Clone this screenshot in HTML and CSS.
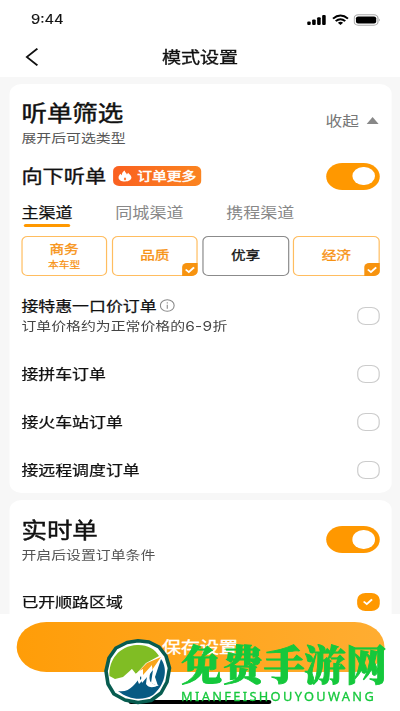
FILE: index.html
```html
<!DOCTYPE html>
<html lang="zh-CN">
<head>
<meta charset="utf-8">
<title>模式设置</title>
<link rel="stylesheet" href="styles.css">
</head>
<body>
<div class="screen">
  <div class="status">
    <span class="time">9:44</span>
    <span class="signals">
      <svg width="16" height="12" viewBox="0 0 16 12"><rect x="0" y="7.5" width="3" height="3.5" rx="1"/><rect x="4.2" y="5.5" width="3" height="5.5" rx="1"/><rect x="8.4" y="3.3" width="3" height="7.7" rx="1"/><rect x="12.6" y="1" width="3" height="10" rx="1"/></svg>
      <svg width="14" height="12" viewBox="0 0 14 12" fill="none" stroke="#000" stroke-width="1.8"><path d="M.7 4.6Q7-1.6 13.3 4.6M3 7.2Q7 3.4 11 7.2"/><path d="M4.8 8.7Q7 7 9.2 8.7L7 11z" fill="#000" stroke="none"/></svg>
      <svg width="23" height="12" viewBox="0 0 23 12"><rect x=".5" y=".8" width="20" height="10.4" rx="3.4" fill="none" stroke="#aaa"/><rect x="2" y="2.4" width="17" height="7.2" rx="1.8"/><path d="M21.5 4.5Q23 6 21.5 7.5z" fill="#999"/></svg>
    </span>
  </div>
  <header class="nav">
    <svg class="back" width="12" height="20" viewBox="0 0 12 20"><path d="M10.4 1.6 1.6 10l8.8 8.4" fill="none" stroke="#111" stroke-width="1.7"/></svg>
    <h1>模式设置</h1>
  </header>
  <main class="content">
    <section class="card">
      <div class="card-head">
        <div><h2>听单筛选</h2><p class="note">展开后可选类型</p></div>
        <span class="fold">收起 <i class="tri"></i></span>
      </div>
      <div class="listen">
        <h3>向下听单</h3>
        <span class="badge"><svg width="12" height="12" viewBox="0 0 12 12"><path d="M6 11.5C2.8 11.5.6 10 .6 7.5.6 5.9 1.5 5 2.1 3.8L3.3 5.2C3.4 3 4.4 1.5 5.8.6 5.9 2.4 7 3 7.6 4.4L8.600 2.8C9.8 4.3 11.4 5.8 11.4 7.6 11.4 10 9.2 11.5 6 11.5z" fill="#fff"/><path d="M6 10.5Q4 9 6 7.2 8 9 6 10.5z" fill="#ff7530"/></svg>订单更多</span>
        <span class="switch"></span>
      </div>
      <nav class="tabs"><span class="on">主渠道</span><span>同城渠道</span><span>携程渠道</span></nav>
      <div class="chips">
        <div class="chip"><b>商务</b><small>本车型</small></div>
        <div class="chip"><b>品质</b><span class="corner"><svg width="9" height="8" viewBox="0 0 9 8"><path d="m1 3.5 2.6 2.6L8 1.4"/></svg></span></div>
        <div class="chip plain"><b>优享</b></div>
        <div class="chip"><b>经济</b><span class="corner"><svg width="9" height="8" viewBox="0 0 9 8"><path d="m1 3.5 2.6 2.6L8 1.4"/></svg></span></div>
      </div>
      <div class="row tall">
        <div>
          <div class="label">接特惠一口价订单<svg width="13" height="13" viewBox="0 0 13 13"><circle cx="6.5" cy="6.5" r="5.8"/><path d="M6.5 5.7v4M6.5 3.2v1.3"/></svg></div>
          <p class="note dark">订单价格约为正常价格的<span class="num">6-9</span>折</p>
        </div>
        <span class="check"></span>
      </div>
      <div class="row"><span class="label">接拼车订单</span><span class="check"></span></div>
      <div class="row"><span class="label">接火车站订单</span><span class="check"></span></div>
      <div class="row"><span class="label">接远程调度订单</span><span class="check"></span></div>
    </section>
    <section class="card">
      <div class="card-head live">
        <div><h2>实时单</h2><p class="note">开启后设置订单条件</p></div>
        <span class="switch"></span>
      </div>
      <div class="row area"><span class="label">已开顺路区域</span><span class="check checked"><svg width="10" height="8" viewBox="0 0 9 8"><path d="m1 3.5 2.6 2.6L8 1.4"/></svg></span></div>
    </section>
  </main>
  <footer class="footer">
    <div class="save">保存设置</div>
    <div class="home"></div>
  </footer>
</div>
<div class="mark">
  <svg class="logo" width="68" height="66" viewBox="0 0 68 66">
    <path d="M23 3.500 34 1.800 45 3 55 8 62 17 65.500 29 63 43 57 54 47 61.500 34 63.500 21 61 10 55 4 45 2 32 5 19 12 9z" fill="#fff" stroke="#075c50" stroke-width="3.6" stroke-linejoin="round"/>
    <path d="M5.500 37C4.500 21 15 7 33 6 43 5.500 51 10 55 17L42 24 32 35 28 30 19 38 11 40z" fill="#80bd24"/>
    <path d="M57 20C65 31 60 47 49 56 39 62 25 61 14 52 26 54 31 45 37 37L38 44 49 31 47 44 54 47 51 38z" fill="#075a83"/>
    <path d="M35 32 43 24 57 18 48 31 48 26 39 36 39 30z" fill="#f8a51b"/>
    <path d="M9 40Q12 44 18 40 24 36 28 30L27 38 36 32 36 41 49 28Q44 37 46 42 48 46 55 46 46 51 42 45L43 37 35 45 33 40C27 50 17 53 13 47z" fill="#fff"/>
  </svg>
  <div class="words"><div class="brand">免费手游网</div><div class="pinyin">MIANFEISHOUYOUWANG</div></div>
</div>
</body>
</html>
```
FILE: styles.css
```css
* { box-sizing: border-box; margin: 0; padding: 0; }
html, body { height: 711px; overflow: hidden; }
body { position: relative; width: 400px; background: #fff; font-family: "Noto Sans CJK SC", sans-serif; color: #111; }

/* The handset view is laid out 336px wide and stretched to fill the window. */
.screen { width: 336px; height: 711px; display: flex; flex-direction: column; transform: scaleX(1.190476); transform-origin: 0 0; white-space: nowrap; }
.status { height: 39px; flex: none; display: flex; justify-content: space-between; align-items: center; padding: 0 16px 0 26px; }
.time { font: 400 12.500px/14px Inter, sans-serif; -webkit-text-stroke: .15px #111; }
.signals { display: flex; align-items: center; gap: 4.500px; }
.nav { height: 38px; flex: none; display: grid; grid-template-columns: 60px 1fr 60px; align-items: center; }
.back { margin-left: 21px; margin-top: -3px; }
h1 { font-size: 16px; line-height: 20px; font-weight: 400; text-align: center; -webkit-text-stroke: .35px #111; margin-top: -5px; }
.content { height: 537px; overflow: hidden; background: #f7f7f7; padding: 7px 7px 0 7.500px; flex: none; }
.card { background: #fff; border-radius: 10px; padding: 0 10.500px; margin-bottom: 7px; height: 409px; }
.card-head { height: 72px; display: flex; justify-content: space-between; align-items: flex-start; padding-top: 14px; }
h2 { font-size: 21.400px; line-height: 28px; font-weight: 400; -webkit-text-stroke: .45px #111; }
.note { font-size: 12.500px; line-height: 16px; color: #555; margin-top: 4px; }
.fold { display: flex; align-items: center; gap: 6px; font-size: 14px; line-height: 20px; color: #777; margin-top: 12px; margin-right: 1px; }
.tri { border: 5px solid transparent; border-top: 0; border-bottom: 7px solid #888; }
.listen { height: 40px; display: flex; align-items: center; }
h3 { font-size: 17.800px; line-height: 24px; font-weight: 400; -webkit-text-stroke: .35px #111; margin-top: -2px; }
.badge { margin-left: 6px; width: 74px; height: 20px; border-radius: 5px; background: linear-gradient(90deg, #fa6020, #fb8420); color: #fff; font-size: 12.400px; line-height: 20px; font-weight: 400; -webkit-text-stroke: .5px #fff; display: flex; align-items: center; justify-content: center; gap: 4px; }
.switch { margin-left: auto; width: 45px; height: 27px; border-radius: 14px; background: #ff9800; display: flex; align-items: center; justify-content: flex-end; padding-right: 4px; }
.switch::after { content: ""; width: 18.500px; height: 18.500px; border-radius: 50%; background: #fff; }
.tabs { height: 40px; display: flex; gap: 36px; font-size: 14.300px; line-height: 20px; color: #888; padding-top: 6px; }
.tabs .on { color: #111; -webkit-text-stroke: .25px #111; }
.on::after { content: ""; display: block; width: 39px; height: 3px; border-radius: 2px; background: #ff9800; margin: 2px auto 0; }
.chips { display: grid; grid-template-columns: repeat(4, 1fr); gap: 3.600px; height: 40px; margin-left: -.5px; margin-right: -.3px; }
.chip { position: relative; border: 1px solid #ffbd60; border-radius: 5px; color: #f79212; display: flex; flex-direction: column; align-items: center; justify-content: center; }
.chip b { font-size: 12.300px; line-height: 15px; font-weight: 400; -webkit-text-stroke: .3px currentColor; margin-top: -1px; }
.chip small { font-size: 9px; line-height: 12px; margin-top: 2px; -webkit-text-stroke: .2px currentColor; }
.chip small { margin-bottom: -1px; }
.chip.plain { border-color: #8b8b8b; color: #111; }
.corner { position: absolute; right: -1px; bottom: -1px; width: 13px; height: 13px; background: #f7930f; border-radius: 4px 0 5px 0; display: flex; align-items: center; justify-content: center; }
.corner path, .checked path { fill: none; stroke: #fff; stroke-width: 1.700; }
.row { height: 48px; display: flex; align-items: center; justify-content: space-between; }
.row.tall { height: 74px; align-items: flex-start; padding-top: 21px; }
.label { font-size: 14.200px; line-height: 20px; font-weight: 400; display: flex; align-items: center; gap: 2px; -webkit-text-stroke: .25px #111; margin-top: -2px; }
.label svg { fill: none; stroke: #888; stroke-width: .9; margin-top: 1px; }
.dark { color: #444; margin-top: 3px; }
.num { font-family: Inter, sans-serif; font-size: 13px; letter-spacing: .3px; }
.check { width: 18.500px; height: 18px; border: 1px solid #ccc; border-radius: 7px; display: flex; align-items: center; justify-content: center; flex: none; }
.tall .check { margin-top: 10px; }
.checked { border: 0; background: #ff9800; }
.live { height: 78px; padding-top: 15px; }
.live .switch { margin-top: 11px; }
.footer { flex: 1; background: #fff; padding: 8px 13.500px 0; }
.save { height: 50px; border-radius: 25px; background: linear-gradient(90deg, #ff9d08, #ffad32); color: #fff; font-size: 16px; line-height: 48px; font-weight: 400; -webkit-text-stroke: .4px #fff; text-align: center; }
.home { width: 120px; height: 4px; border-radius: 2px; background: #000; margin: 28px auto 0; }

/* Site watermark over the bottom of the screen. */
.mark { position: absolute; left: 104px; top: 639px; display: flex; white-space: nowrap; }
.words { margin-left: 9px; color: #15c83c; }
.brand { font: 900 41.200px/48px "Noto Serif CJK SC", "Noto Sans CJK SC", serif; -webkit-text-stroke: .9px #15c83c; }
.pinyin { font: 400 12.800px/18px "Noto Sans", sans-serif; letter-spacing: 2.350px; -webkit-text-stroke: .3px #15c83c; }
```
